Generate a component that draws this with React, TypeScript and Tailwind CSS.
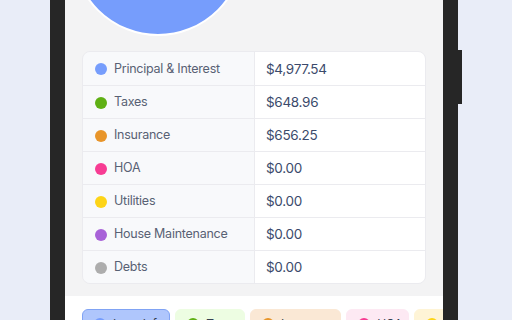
import React from "react";

type Row = { label: string; value: string; dot: string };

const rows: Row[] = [
  { label: "Principal & Interest", value: "$4,977.54", dot: "bg-[#769dfc]" },
  { label: "Taxes", value: "$648.96", dot: "bg-[#5fb014]" },
  { label: "Insurance", value: "$656.25", dot: "bg-[#e8952a]" },
  { label: "HOA", value: "$0.00", dot: "bg-[#f73c93]" },
  { label: "Utilities", value: "$0.00", dot: "bg-[#fdd417]" },
  { label: "House Maintenance", value: "$0.00", dot: "bg-[#a862d8]" },
  { label: "Debts", value: "$0.00", dot: "bg-[#adadad]" },
];

const tabs = [
  { label: "Loan Info", dot: "bg-[#769dfc]", pill: "bg-[#afc6fc] border-[#80a3f4]" },
  { label: "Taxes", dot: "bg-[#5fb014]", pill: "bg-[#edfde2] border-[#edfde2]" },
  { label: "Insurance", dot: "bg-[#e8952a]", pill: "bg-[#fae8d5] border-[#fae8d5]" },
  { label: "HOA", dot: "bg-[#f73c93]", pill: "bg-[#fde9f3] border-[#fde9f3]" },
  { label: "Utilities", dot: "bg-[#fdd417]", pill: "bg-[#fef4d6] border-[#fef4d6]" },
];

export default function App() {
  return (
    <div
      className="h-[320px] overflow-hidden bg-[#e9edf8]"
      style={{ fontFamily: "Inter, 'Noto Sans', sans-serif" }}
    >
      <div className="relative ml-[50px] w-[408px] h-[320px] border-x-[15px] border-[#262626]">
        {/* side button */}
        <div className="absolute right-[-19px] top-[50px] w-[4px] h-[54px] bg-[#262626]" />

        <div className="h-full overflow-hidden bg-white">
          {/* chart + breakdown */}
          <div className="bg-[#f3f3f4] px-[17px] pb-3">
            <div className="mt-[-136px] ml-[-10px] w-[172px] h-[172px] rounded-full bg-[#769dfc] border-2 border-white" />

            <div className="mt-[15px] rounded-lg border border-[#ebebef] overflow-hidden">
              {rows.map((r, i) => (
                <div
                  key={r.label}
                  className={`flex h-[33px] ${i > 0 ? "border-t border-[#ebebef]" : ""}`}
                >
                  <div className="w-[172px] flex items-center gap-[7px] pl-[12px] pt-px bg-[#f8f9fb] border-r border-[#ebebef]">
                    <span className={`w-3 h-3 rounded-full shrink-0 ${r.dot}`} />
                    <span className="text-[12.5px] tracking-[-0.25px] text-[#586174]">{r.label}</span>
                  </div>
                  <div className="flex-1 flex items-center pl-[11px] pt-px bg-white">
                    <span className="text-[13.5px] tracking-[-0.3px] text-[#3b4a6b]">{r.value}</span>
                  </div>
                </div>
              ))}
            </div>
          </div>

          {/* category tabs */}
          <div className="flex gap-[5px] pl-[17px] pt-[13px] overflow-hidden">
            {tabs.map((t) => (
              <div
                key={t.label}
                className={`shrink-0 flex items-center gap-[7px] h-[30px] pl-[11px] pr-[6px] rounded-md border ${t.pill}`}
              >
                <span className={`w-3 h-3 rounded-full shrink-0 ${t.dot}`} />
                <span className="text-[12px] tracking-[-0.3px] text-[#374151]">{t.label}</span>
              </div>
            ))}
          </div>
        </div>
      </div>
    </div>
  );
}
